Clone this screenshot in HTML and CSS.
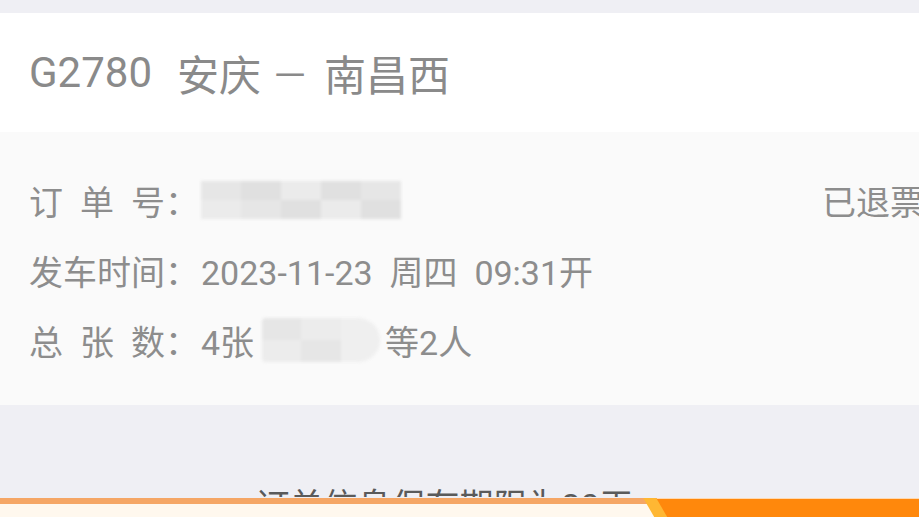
FILE: index.html
```html
<!DOCTYPE html>
<html lang="zh-CN">
<head>
    <meta charset="UTF-8">
    <meta name="viewport" content="width=device-width, initial-scale=1.0">
    <title>订单详情</title>
    <link rel="stylesheet" href="styles.css">
</head>
<body>
    <div class="top-gap"></div>

    <div class="title-bar">
        <span class="train-no">G2780</span>
        <span class="station">安庆</span>
        <span class="dash">一</span>
        <span class="station">南昌西</span>
    </div>

    <div class="info">
        <div class="info-row">
            <span class="label"><span class="spread">订单</span>号：</span>
            <span class="mosaic mosaic-order">
                <i></i><i></i><i></i><i></i><i></i><i></i><i></i><i></i><i></i><i></i>
            </span>
            <span class="status">已退票</span>
        </div>
        <div class="info-row">
            <span class="label">发车时间：</span>
            <span class="value">2023-11-23&nbsp;&nbsp;周四&nbsp;&nbsp;09:31开</span>
        </div>
        <div class="info-row">
            <span class="label"><span class="spread">总张</span>数：</span>
            <span class="value">4张</span>
            <span class="mosaic mosaic-name">
                <i></i><i></i><i></i><i></i><i></i><i></i>
            </span>
            <span class="value">等2人</span>
        </div>
    </div>

    <div class="notice">
        <div class="notice-text">订单信息保存期限为30天</div>
    </div>

    <!-- bottom action bar lying over the page -->
    <div class="action-bar">
        <div class="action-left"></div>
        <div class="action-right"></div>
    </div>
</body>
</html>
```

FILE: styles.css
```css
body {
    margin: 0;
    background-color: #efeff4;
    font-family: Roboto, "Noto Sans CJK SC", sans-serif;
    overflow: hidden;
    height: 517px;
}

.top-gap {
    height: 13px;
}

.title-bar {
    height: 119px;
    background-color: #ffffff;
    display: flex;
    align-items: center;
    padding-left: 29px;
    font-size: 42px;
    color: #8a8a8a;
}

.train-no {
    margin-right: 25px;
}

.dash {
    font-size: 30px;
    margin: 0 19px 0 14px;
}

.info {
    background-color: #fafafa;
    padding: 33px 0 30px 29px;
}

.info-row {
    display: flex; /* label, value and status side by side */
    align-items: center;
    height: 70px;
    font-size: 34px;
    color: #8d8d8d;
    white-space: nowrap;
}

.label {
    width: 172px;
}

.spread {
    letter-spacing: 17px;
}

.status {
    margin-left: auto;
    margin-right: -5px;
}

.mosaic {
    display: grid;
    filter: blur(1.5px);
}

.mosaic i {
    background-color: #e6e6e6;
}

.mosaic-order {
    width: 200px;
    height: 38px;
    grid-template-columns: repeat(5, 1fr);
    grid-template-rows: 1fr 1fr;
}

.mosaic-order i:nth-child(2n) {
    background-color: #e0e0e0;
}

.mosaic-order i:nth-child(3n) {
    background-color: #ebebeb;
}

.mosaic-name {
    width: 118px;
    height: 44px;
    margin: 0 5px 0 8px;
    grid-template-columns: repeat(3, 1fr);
    grid-template-rows: 1fr 1fr;
    border-radius: 4px 22px 22px 4px;
    overflow: hidden;
}

.mosaic-name i:nth-child(2n) {
    background-color: #ececec;
}

.mosaic-name i:nth-child(3n) {
    background-color: #efefef;
}

.notice {
    height: 92px;
    position: relative;
    overflow: hidden;
}

.notice-text {
    position: absolute;
    top: 81px;
    left: 0;
    right: 30px;
    text-align: center;
    font-size: 34px;
    color: #5a5a5a;
    line-height: 40px;
}

.action-bar {
    position: fixed;
    left: 0;
    right: 0;
    bottom: 0;
    height: 19px;
    display: flex;
}

.action-left {
    flex: 1;
    background-color: #fff8ee;
    border-top: 6px solid #f5a665;
}

.action-right {
    width: 262px;
    background-color: #ff880c;
    position: relative;
    border-top: 1px solid #ffd9b0;
}

.action-right::before {
    content: "";
    position: absolute;
    top: -1px;
    left: -8px;
    width: 13px;
    height: 20px;
    background-color: #ffb733;
    transform: skewX(30deg);
}
```
